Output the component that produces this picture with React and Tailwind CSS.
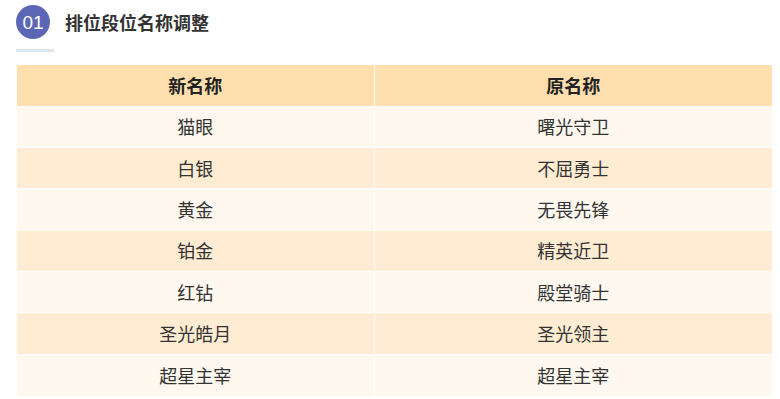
const rows = [
  ["猫眼", "曙光守卫"],
  ["白银", "不屈勇士"],
  ["黄金", "无畏先锋"],
  ["铂金", "精英近卫"],
  ["红钻", "殿堂骑士"],
  ["圣光皓月", "圣光领主"],
  ["超星主宰", "超星主宰"],
];

export default function App() {
  return (
    <div
      className="w-[780px] h-[399px] bg-white overflow-hidden"
      style={{ fontFamily: '"Noto Sans CJK SC", "Noto Sans", sans-serif' }}
    >
      <div className="pl-4 pt-[5px]">
        <div className="flex items-center">
          <div className="w-[34px] h-[34px] rounded-full bg-[#5b67b4] text-white text-[19px] font-['Liberation_Sans',sans-serif] flex items-center justify-center leading-none">
            01
          </div>
          <h2 className="ml-[15px] text-[18px] font-bold text-[#333] leading-none">
            排位段位名称调整
          </h2>
        </div>
        <div className="mt-[10px] w-[38px] h-[3px] bg-[#dde5ef]" />
      </div>

      <table className="ml-[17px] mt-[13px] w-[755px] table-fixed border-collapse text-[18px]">
        <thead>
          <tr className="bg-[#ffdfae] h-[41px]">
            <th className="w-[357px] font-bold text-[#222] border-r border-white">新名称</th>
            <th className="font-bold text-[#222]">原名称</th>
          </tr>
        </thead>
        <tbody>
          {rows.map(([a, b], i) => (
            <tr
              key={a + b}
              className={`h-[41.4px] border-t border-white ${i % 2 === 0 ? "bg-[#fef8ef]" : "bg-[#ffecd2]"}`}
            >
              <td className="text-center text-[#333] border-r border-white">{a}</td>
              <td className="text-center text-[#333]">{b}</td>
            </tr>
          ))}
        </tbody>
      </table>
    </div>
  );
}
